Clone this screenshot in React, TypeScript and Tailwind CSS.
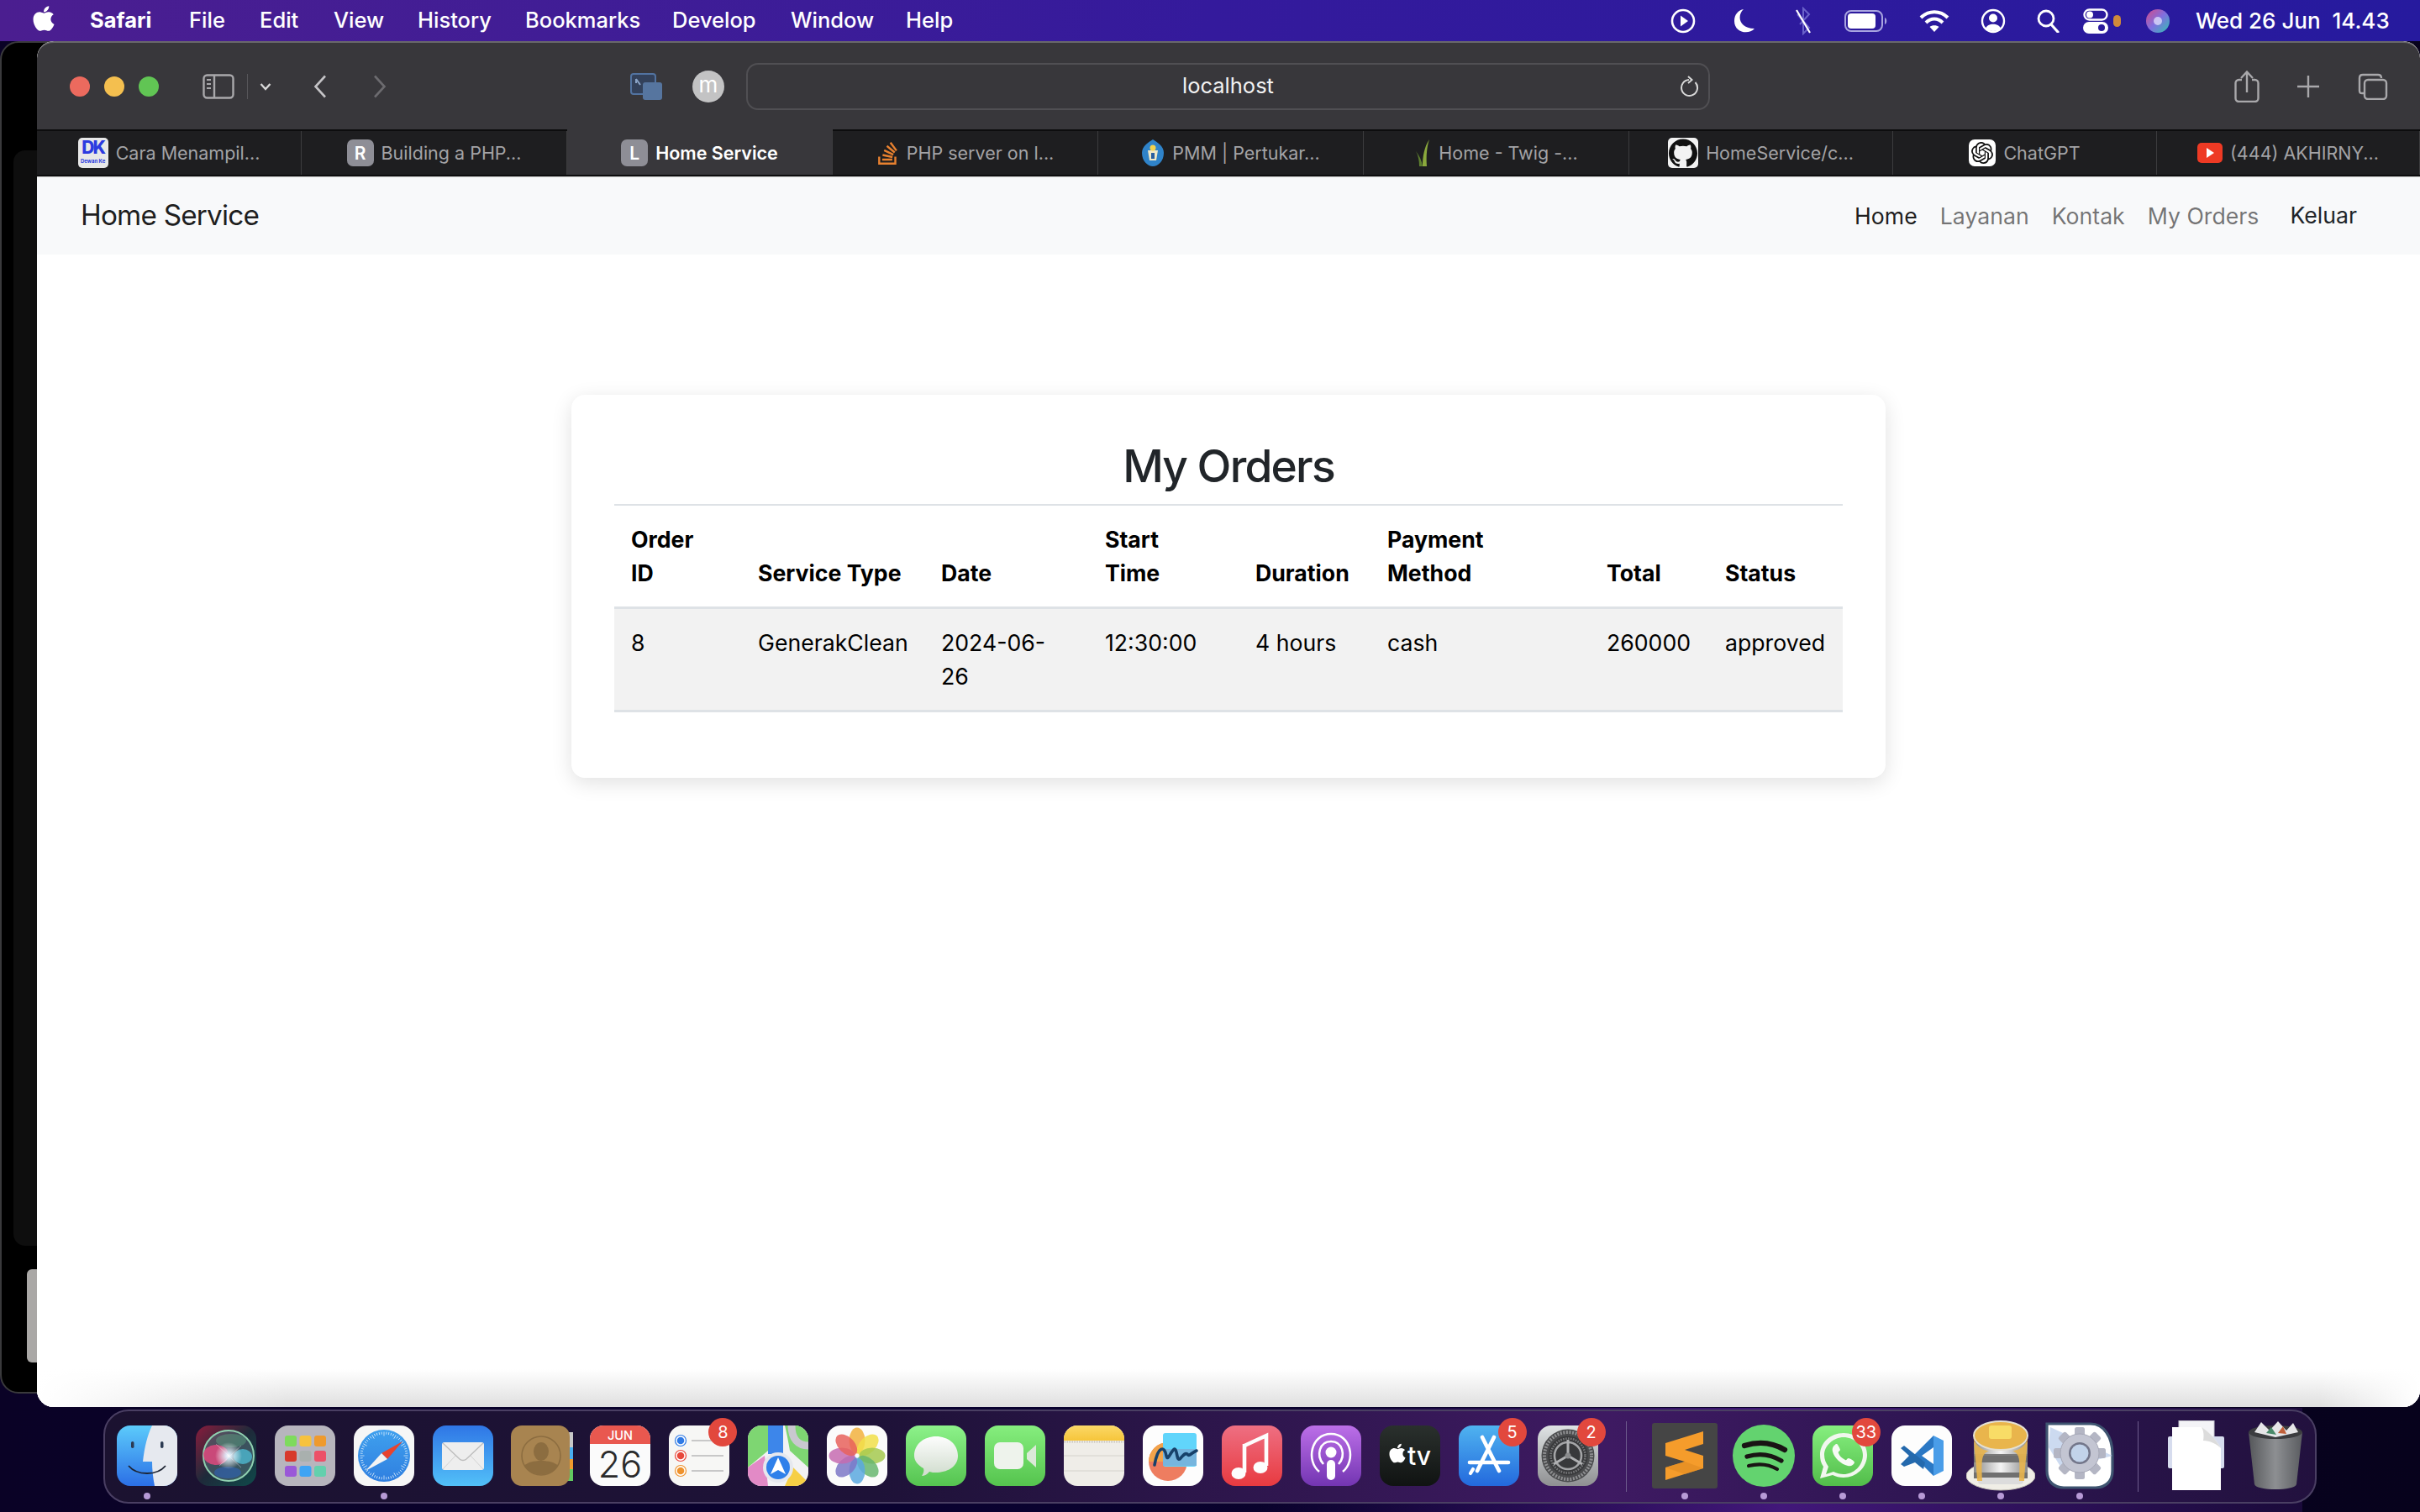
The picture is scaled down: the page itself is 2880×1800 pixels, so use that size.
import React from "react";
import { FaApple } from "react-icons/fa";
import { SiOpenai, SiGithub, SiStackoverflow } from "react-icons/si";

const sf = { fontFamily: "Inter, 'Liberation Sans', sans-serif" };

function Ico({ w, h, vb, children, className = "" }: { w: number; h: number; vb?: string; children: React.ReactNode; className?: string }) {
  return (
    <svg width={w} height={h} viewBox={vb ?? `0 0 ${w} ${h}`} fill="none" className={"block shrink-0 " + className}>
      {children}
    </svg>
  );
}

/* ---------- Menu bar status icons ---------- */
const S = "#ffffff";
function StatusIcons() {
  return (
    <div className="flex items-center h-full">
      <Ico w={30} h={30}>
        <circle cx="15" cy="15" r="13" stroke={S} strokeWidth="2.6" />
        <path d="M12 8.5 L21 15 L12 21.5 Z" fill={S} />
      </Ico>
      <Ico w={30} h={32} className="ml-[43px]">
        <path d="M14 2 C6 9 8 25 27 25 C20 33 3 30 3 16 C3 8 8 3 14 2 Z" fill={S} />
      </Ico>
      <Ico w={24} h={34} className="ml-[43px]">
        <path d="M5 9 L19 25 L12 32 L12 2 L19 9 L8 21" stroke="#6a62c9" strokeWidth="2" />
        <path d="M4 4 L20 31" stroke={S} strokeWidth="2.2" />
      </Ico>
      <Ico w={52} h={26} className="ml-[37px]">
        <rect x="1" y="1" width="44" height="24" rx="7" stroke="#a8a4e0" strokeWidth="2" />
        <rect x="4" y="4" width="33" height="18" rx="4" fill={S} />
        <path d="M48 9 C51 10 51 16 48 17 Z" fill="#a8a4e0" />
      </Ico>
      <Ico w={36} h={28} className="ml-[37px]">
        <path d="M2 10 C11 1 25 1 34 10" stroke={S} strokeWidth="4" />
        <path d="M8 16 C14 10 22 10 28 16" stroke={S} strokeWidth="4" />
        <path d="M18 27 L12.5 21 C15 18.5 21 18.5 23.5 21 Z" fill={S} />
      </Ico>
      <Ico w={30} h={30} className="ml-[37px]">
        <circle cx="15" cy="15" r="13" stroke={S} strokeWidth="2.4" />
        <circle cx="15" cy="11.5" r="5" fill={S} />
        <path d="M6 24 C8 17 22 17 24 24 C20 28 10 28 6 24 Z" fill={S} />
      </Ico>
      <Ico w={28} h={28} className="ml-[36px]">
        <circle cx="12" cy="11" r="9" stroke={S} strokeWidth="2.8" />
        <path d="M18 18 L26 27" stroke={S} strokeWidth="3.2" strokeLinecap="round" />
      </Ico>
      <Ico w={32} h={30} className="ml-[28px]">
        <rect x="1.5" y="1.5" width="27" height="12" rx="6" stroke={S} strokeWidth="2.4" />
        <circle cx="8" cy="7.5" r="4" fill={S} />
        <rect x="0" y="16" width="30" height="14" rx="7" fill={S} />
        <circle cx="22" cy="23" r="4" fill="#2a1a9c" />
      </Ico>
      <div className="w-[9px] h-[14px] rounded-full bg-[#d08a3a] ml-[4px]" />
      <Ico w={30} h={30} className="ml-[29px]">
        <defs>
          <linearGradient id="sb" x1="0" y1="0" x2="1" y2="1">
            <stop offset="0" stopColor="#d44a88" />
            <stop offset=".5" stopColor="#7f6fe0" />
            <stop offset="1" stopColor="#2fc3b0" />
          </linearGradient>
        </defs>
        <circle cx="15" cy="15" r="14" fill="url(#sb)" />
        <circle cx="15" cy="15" r="5" fill="#eaeaff" opacity=".7" />
      </Ico>
      <span className="ml-[30px] text-[26px] text-white font-medium whitespace-pre leading-none" style={sf}>Wed 26 Jun  14.43</span>
    </div>
  );
}

function MenuBar() {
  const items = [
    ["File", 225],
    ["Edit", 309],
    ["View", 397],
    ["History", 497],
    ["Bookmarks", 625],
    ["Develop", 800],
    ["Window", 941],
    ["Help", 1078],
  ] as const;
  return (
    <div className="relative h-[49px] w-full bg-gradient-to-r from-[#4b1e90] via-[#341a9c] to-[#261a9e]" style={sf}>
      <div className="absolute left-[1988px] top-0 h-full"><StatusIcons /></div>
      <FaApple className="absolute left-[35px] top-[5px] text-white" size={34} />
      <span className="absolute left-[107px] top-[5px] text-[25.5px] font-bold text-white">Safari</span>
      {items.map(([t, x]) => (
        <span key={t} className="absolute top-[5px] text-[25.5px] font-medium text-white" style={{ left: x }}>{t}</span>
      ))}
    </div>
  );
}

/* ---------- Safari toolbar ---------- */
function Toolbar() {
  const I = "#a9a8ab";
  return (
    <div className="relative flex items-center h-[105px] bg-[#38373b] border-t-2 border-[#69686b] rounded-t-[20px] pl-[39px] pr-[38px]" style={sf}>
      <div className="flex gap-[17px]">
        <div className="w-6 h-6 rounded-full bg-[#ec6a5e]" />
        <div className="w-6 h-6 rounded-full bg-[#f4bf4f]" />
        <div className="w-6 h-6 rounded-full bg-[#61c554]" />
      </div>
      <Ico w={38} h={30} className="ml-[52px]">
        <rect x="1.5" y="1.5" width="35" height="27" rx="4" stroke={I} strokeWidth="2.4" />
        <path d="M14 2 V28" stroke={I} strokeWidth="2.4" />
        <path d="M5 7 H10 M5 12 H10 M5 17 H10" stroke={I} strokeWidth="2" />
      </Ico>
      <div className="w-px h-[30px] bg-[#57565a] ml-[15px]" />
      <Ico w={14} h={10} className="ml-[14px]">
        <path d="M1.5 2 L7 8 L12.5 2" stroke="#d8d8d8" strokeWidth="2.4" />
      </Ico>
      <Ico w={16} h={28} className="ml-[50px]">
        <path d="M14 1.5 L2.5 14 L14 26.5" stroke="#c4c3c6" strokeWidth="2.6" />
      </Ico>
      <Ico w={16} h={28} className="ml-[55px]">
        <path d="M2 1.5 L13.5 14 L2 26.5" stroke="#6c6b6f" strokeWidth="2.6" />
      </Ico>
      <Ico w={38} h={32} className="ml-[290px]">
        <rect x="1" y="1" width="29" height="24" rx="3" fill="#33415a" stroke="#5273a0" strokeWidth="2" />
        <rect x="15" y="11" width="23" height="21" rx="3" fill="#56759f" />
        <path d="M7 7 L12 14 M7 7 V12" stroke="#8aa3c6" strokeWidth="2" />
      </Ico>
      <div className="w-[38px] h-[38px] rounded-full bg-[#c3c3c4] ml-[36px] flex items-center justify-center text-white text-[26px] leading-none pb-[3px]">m</div>
      <div className="relative w-[1147px] h-[56px] ml-[26px] rounded-[14px] border-2 border-[#504f53] flex items-center justify-center text-[25.5px] text-[#f2f2f2]">
        localhost
        <Ico w={24} h={26} className="absolute right-[11px] top-[13px]">
          <path d="M19.5 8 A9.5 9.5 0 1 1 12 5" stroke="#d8d8d8" strokeWidth="2" />
          <path d="M11 1 L15.5 5 L11 9" stroke="#d8d8d8" strokeWidth="2" />
        </Ico>
      </div>
      <div className="flex-1" />
      <Ico w={30} h={38}>
        <rect x="1.5" y="11" width="27" height="26" rx="4" stroke={I} strokeWidth="2.4" />
        <rect x="9" y="5" width="12" height="10" fill="#38373b" />
        <path d="M15 26 V2 M8 9 L15 1.5 L22 9" stroke={I} strokeWidth="2.4" />
      </Ico>
      <Ico w={28} h={28} className="ml-[44px]">
        <path d="M14 1 V27 M1 14 H27" stroke={I} strokeWidth="2.4" />
      </Ico>
      <Ico w={36} h={32} className="ml-[45px]">
        <path d="M7 24 H5 C3 24 2 23 2 21 V6 C2 3 3 2 6 2 H24 C27 2 28 3 28 6" stroke={I} strokeWidth="2.4" />
        <rect x="8" y="8" width="26" height="23" rx="4" stroke={I} strokeWidth="2.4" />
      </Ico>
    </div>
  );
}

/* ---------- Tabs ---------- */
const Letter = ({ c }: { c: string }) => (
  <div className="w-8 h-8 rounded-[7px] bg-[#8e8e96] flex items-center justify-center text-white text-[21px] font-semibold leading-none">{c}</div>
);
const fav: Record<string, React.ReactNode> = {
  dk: (
    <div className="w-9 h-9 rounded-[5px] bg-[#e8e8e8] flex flex-col items-center overflow-hidden">
      <span className="text-[#2b3ae0] text-[21px] leading-[23px] font-extrabold tracking-[-2px]">DK</span>
      <span className="text-[#2b3ae0] text-[6px] leading-[10px] font-bold whitespace-nowrap">Dewan Ke</span>
    </div>
  ),
  r: <Letter c="R" />,
  l: <Letter c="L" />,
  so: <SiStackoverflow size={27} className="text-[#e8812f]" />,
  pmm: (
    <Ico w={28} h={32}>
      <path d="M14 0 C20 4 27 8 27 16 C27 26 20 32 14 32 C8 32 1 26 1 16 C1 8 8 4 14 0 Z" fill="#2f83c9" />
      <path d="M8 13 H20 L18 25 H10 Z" fill="#f0e9c8" />
      <circle cx="14" cy="10" r="3.5" fill="#f3d34d" />
      <path d="M12 16 H16 V23 H12 Z" fill="#2a5fa0" />
    </Ico>
  ),
  twig: (
    <Ico w={20} h={32}>
      <path d="M18 0 C12 9 10 20 10 32 H15 C14 20 15 9 18 0 Z" fill="#8aa83c" />
      <path d="M2 14 C5 19 6 26 6 32 H10 C9 25 6 19 2 14 Z" fill="#5c7d2e" />
    </Ico>
  ),
  gh: (
    <div className="w-9 h-9 rounded-[5px] bg-[#f2f2f2] flex items-center justify-center">
      <SiGithub size={34} className="text-[#111]" />
    </div>
  ),
  gpt: (
    <div className="w-8 h-8 rounded-[7px] bg-white flex items-center justify-center">
      <SiOpenai size={26} className="text-[#111]" />
    </div>
  ),
  yt: (
    <div className="w-[30px] h-[24px] rounded-[5px] bg-[#ee3a24] flex items-center justify-center">
      <div className="w-0 h-0 border-y-[6px] border-y-transparent border-l-[9px] border-l-white" />
    </div>
  ),
};
const tabs = [
  ["dk", "Cara Menampil...", 315],
  ["r", "Building a PHP...", 316],
  ["l", "Home Service", 316],
  ["so", "PHP server on l...", 316],
  ["pmm", "PMM | Pertukar...", 316],
  ["twig", "Home - Twig -...", 316],
  ["gh", "HomeService/c...", 314],
  ["gpt", "ChatGPT", 314],
  ["yt", "(444) AKHIRNY...", 313],
] as const;

function TabBar() {
  return (
    <div className="flex h-[56px] bg-[#1e1e20] border-t-2 border-b-2 border-[#0d0d0e]" style={sf}>
      {tabs.map(([f, t, w]) => (
        <div
          key={t}
          className={
            "flex items-center justify-center gap-[9px] border-r border-[#3c3c3e] " +
            (f === "l" ? "bg-[#38373b] -mt-[2px] h-[54px] pt-[2px] text-white font-semibold" : "h-full text-[#a3a3a6]")
          }
          style={{ width: w }}
        >
          {fav[f]}
          <span className="text-[21.5px] whitespace-nowrap">{t}</span>
        </div>
      ))}
    </div>
  );
}

/* ---------- Page ---------- */
function NavBar() {
  return (
    <div className="flex items-center h-[93px] bg-[#f8f9fa] border-t border-[#c8c8c8] pl-[52px] pr-[75px] text-[26.67px]" style={sf}>
      <span className="text-[33.3px] tracking-[-0.8px] text-black/90">Home Service</span>
      <div className="flex-1" />
      <span className="text-black/90">Home</span>
      <span className="text-black/55 ml-[27px]">Layanan</span>
      <span className="text-black/55 ml-[27px]">Kontak</span>
      <span className="text-black/55 ml-[27px]">My Orders</span>
      <span className="text-[#212529] ml-[37px] -mt-[3px]">Keluar</span>
    </div>
  );
}

const cols = [151, 218, 195, 179, 157, 261, 141, 160];
const head: React.ReactNode[] = [
  <>Order<br />ID</>,
  "Service Type",
  "Date",
  <>Start<br />Time</>,
  "Duration",
  <>Payment<br />Method</>,
  "Total",
  "Status",
];
const row = ["8", "GenerakClean", "2024-06-26", "12:30:00", "4 hours", "cash", "260000", "approved"];

function OrdersCard() {
  return (
    <div className="w-[1564px] h-[456px] mx-auto mt-[167px] bg-white rounded-[16px] shadow-[0_6px_24px_rgba(0,0,0,0.12)] px-[51px] pt-[53px]" style={sf}>
      <h2 className="text-[53.3px] leading-[64px] font-medium tracking-[-1.8px] text-[#212529] text-center mb-[13px]">My Orders</h2>
      <table className="w-[1462px] table-fixed border-collapse text-[26.67px] leading-[40px] text-black">
        <colgroup>
          {cols.map((c, i) => (
            <col key={i} style={{ width: c }} />
          ))}
        </colgroup>
        <thead>
          <tr className="border-t-2 border-b-[3px] border-t-[#dee2e6] border-b-[#dee2e6]">
            {head.map((h, i) => (
              <th key={i} className="p-[20px] font-bold text-left align-bottom whitespace-nowrap">{h}</th>
            ))}
          </tr>
        </thead>
        <tbody>
          <tr className="bg-[#f2f2f2] border-b-[3px] border-[#dee2e6]">
            {row.map((c) => (
              <td key={c} className="p-[20px] align-top">{c}</td>
            ))}
          </tr>
        </tbody>
      </table>
    </div>
  );
}

/* ---------- Dock icons ---------- */
const Finder = () => (
  <Ico w={72} h={72}>
    <defs>
      <linearGradient id="f1" x1="0" y1="0" x2="0" y2="1"><stop offset="0" stopColor="#5ccbfb" /><stop offset="1" stopColor="#2b6fe6" /></linearGradient>
      <clipPath id="fc"><rect width="72" height="72" rx="16" /></clipPath>
    </defs>
    <g clipPath="url(#fc)">
      <rect width="72" height="72" fill="url(#f1)" />
      <path d="M42 0 H72 V72 H45 C43 62 42 52 42 43 H31 C33 25 37 10 42 0 Z" fill="#e6e9ef" />
      <rect x="17" y="19" width="3.5" height="8" rx="1.7" fill="#2c3a52" />
      <rect x="52" y="19" width="3.5" height="8" rx="1.7" fill="#2c3a52" />
      <path d="M14 48 C24 60 48 60 58 48" stroke="#1d2433" strokeWidth="1.8" />
    </g>
  </Ico>
);
const Siri = () => (
  <Ico w={72} h={72}>
    <defs>
      <linearGradient id="s0" x1="0" y1="0" x2="1" y2="1"><stop offset="0" stopColor="#8a1c3c" /><stop offset=".5" stopColor="#1e2a3a" /><stop offset="1" stopColor="#0f4a4a" /></linearGradient>
      <radialGradient id="s1" cx=".5" cy=".5" r=".5"><stop offset="0" stopColor="#fff" /><stop offset=".22" stopColor="#dff2ff" stopOpacity=".9" /><stop offset="1" stopColor="#fff" stopOpacity="0" /></radialGradient>
    </defs>
    <rect width="72" height="72" rx="16" fill="url(#s0)" />
    <circle cx="39" cy="36" r="30" fill="#55707a" fillOpacity=".55" stroke="#8fd0b0" strokeWidth="2" />
    <ellipse cx="24" cy="35" rx="15" ry="12" fill="#e0497e" opacity=".85" />
    <ellipse cx="56" cy="37" rx="11" ry="9" fill="#4db8d0" opacity=".8" />
    <ellipse cx="38" cy="56" rx="16" ry="7" fill="#2f62b8" opacity=".6" />
    <ellipse cx="42" cy="18" rx="18" ry="8" fill="#66c08e" opacity=".35" />
    <circle cx="39" cy="36" r="16" fill="url(#s1)" />
    <path d="M24 22 L54 50 M54 24 L28 48" stroke="#fff" strokeWidth="1" opacity=".35" />
  </Ico>
);
const Launchpad = () => {
  const c = ["#7edb5c", "#f7c23e", "#ee9a2e", "#d8392c", "#a9b0ae", "#ec5068", "#9a58d8", "#3ea4f4", "#63d0ad"];
  return (
    <Ico w={72} h={72}>
      <rect width="72" height="72" rx="16" fill="#b7b5bd" />
      {c.map((k, i) => (
        <rect key={i} x={12 + (i % 3) * 17.5} y={12 + Math.floor(i / 3) * 18} width="14" height="13" rx="3" fill={k} />
      ))}
    </Ico>
  );
};
const Safari = () => {
  const t = [];
  for (let i = 0; i < 60; i++) t.push(i * 6);
  return (
    <Ico w={72} h={72}>
      <defs><linearGradient id="sa" x1="0" y1="0" x2="0" y2="1"><stop offset="0" stopColor="#3fa0ee" /><stop offset="1" stopColor="#2f7fe0" /></linearGradient></defs>
      <rect width="72" height="72" rx="16" fill="#f6f6f6" />
      <circle cx="36" cy="36" r="31" fill="url(#sa)" />
      {t.map((a) => (
        <line key={a} x1="36" y1="7.5" x2="36" y2={a % 30 === 0 ? 12.5 : 10.5} stroke="#d9ecfb" strokeWidth=".8" transform={`rotate(${a} 36 36)`} />
      ))}
      <path d="M58 19 L33 33 L40 40 Z" fill="#e8432f" />
      <path d="M14 54 L33 33 L40 40 Z" fill="#f3f3f3" />
    </Ico>
  );
};
const Mail = () => (
  <Ico w={72} h={72}>
    <defs><linearGradient id="m1" x1="0" y1="0" x2="0" y2="1"><stop offset="0" stopColor="#2f76e6" /><stop offset="1" stopColor="#52c0f8" /></linearGradient></defs>
    <rect width="72" height="72" rx="16" fill="url(#m1)" />
    <rect x="11" y="20" width="50" height="33" rx="3" fill="#eeeeee" />
    <path d="M12 21 L32 40 C34 42 38 42 40 40 L60 21" stroke="#bdbdbd" strokeWidth="1.3" />
    <path d="M12 52 L27 36 M60 52 L45 36" stroke="#d2d2d2" strokeWidth="1" />
  </Ico>
);
const Contacts = () => (
  <Ico w={74} h={72}>
    <rect x="64" y="8" width="10" height="18" fill="#c8c8c8" />
    <rect x="64" y="26" width="10" height="14" fill="#48aef0" />
    <rect x="64" y="40" width="10" height="12" fill="#ef9a2e" />
    <rect x="64" y="52" width="10" height="14" fill="#62c960" />
    <rect width="70" height="72" rx="13" fill="#a88450" />
    <circle cx="36" cy="36" r="23" stroke="#8c6d40" strokeWidth="1.6" />
    <ellipse cx="36" cy="31" rx="9" ry="11" fill="#8c6d40" />
    <path d="M16 48 C22 40 50 40 56 48 C50 62 22 62 16 48 Z" fill="#8c6d40" />
  </Ico>
);
const Calendar = () => (
  <Ico w={72} h={72}>
    <defs><clipPath id="cc"><rect width="72" height="72" rx="16" /></clipPath></defs>
    <g clipPath="url(#cc)">
      <rect width="72" height="72" fill="#fbfbfb" />
      <rect width="72" height="22" fill="#e9584f" />
      <text x="36" y="17" textAnchor="middle" fontSize="14.5" fill="#fff" style={sf} fontWeight="500">JUN</text>
      <text x="36" y="62" textAnchor="middle" fontSize="43" fill="#2b2b2b" style={sf} fontWeight="300">26</text>
    </g>
  </Ico>
);
const Reminders = () => (
  <Ico w={72} h={72}>
    <rect width="72" height="72" rx="16" fill="#f7f7f5" />
    {[["#2f7ae5", 18], ["#e8483b", 36], ["#ee922d", 54]].map(([c, y]) => (
      <g key={String(c)}>
        <circle cx="14" cy={y as number} r="6.5" fill="#fff" stroke={c as string} strokeWidth="1.2" />
        <circle cx="14" cy={y as number} r="4.3" fill={c as string} />
        <path d={`M27 ${y} H65`} stroke="#c8c8c8" strokeWidth="1.8" />
      </g>
    ))}
  </Ico>
);
const Maps = () => (
  <Ico w={72} h={72}>
    <defs><clipPath id="mp"><rect width="72" height="72" rx="16" /></clipPath></defs>
    <g clipPath="url(#mp)">
      <rect width="72" height="72" fill="#f2f2f4" />
      <path d="M0 0 H24 V30 L0 50 Z" fill="#7ed672" />
      <path d="M44 0 H72 V50 L50 30 C48 18 46 8 44 0 Z" fill="#7ed672" />
      <path d="M0 50 L20 36 L24 72 H0 Z" fill="#e28ac6" />
      <path d="M44 72 L54 50 L72 68 V72 Z" fill="#f6cf45" />
      <rect x="24" y="0" width="18" height="34" fill="#3d86ea" />
      <path d="M52 0 C52 16 60 24 72 24" stroke="#c9c8cf" strokeWidth="9" />
      <circle cx="36" cy="50" r="18" fill="#e6e8ee" />
      <circle cx="36" cy="50" r="14" fill="#2f80ea" />
      <path d="M36 38 L45 58 L36 53 L27 58 Z" fill="#fff" />
    </g>
  </Ico>
);
const Photos = () => {
  const c = ["#f2b23e", "#f1df4a", "#a5c94f", "#67b66f", "#5aa8df", "#7d77c7", "#c66bb0", "#e8615c"];
  return (
    <Ico w={72} h={72}>
      <rect width="72" height="72" rx="16" fill="#fbfbfb" />
      {c.map((k, i) => (
        <ellipse key={i} cx="36" cy="18" rx="9.5" ry="15.5" fill={k} opacity=".85" transform={`rotate(${i * 45} 36 36)`} />
      ))}
    </Ico>
  );
};
const Messages = () => (
  <Ico w={72} h={72}>
    <defs>
      <linearGradient id="g1" x1="0" y1="0" x2="0" y2="1"><stop offset="0" stopColor="#8df28a" /><stop offset="1" stopColor="#55c450" /></linearGradient>
      <linearGradient id="g2" x1="0" y1="0" x2="0" y2="1"><stop offset="0" stopColor="#fdfdfd" /><stop offset="1" stopColor="#d0dccd" /></linearGradient>
    </defs>
    <rect width="72" height="72" rx="16" fill="url(#g1)" />
    <path d="M36 13 C50 13 62 22 62 36 C62 50 48 56 36 56 C33 56 31 56 28 55 C26 58 22 60 19 60 C21 57 22 54 21 51 C14 47 10 42 10 36 C10 22 22 13 36 13 Z" fill="url(#g2)" />
  </Ico>
);
const FaceTime = () => (
  <Ico w={72} h={72}>
    <defs>
      <linearGradient id="g3" x1="0" y1="0" x2="0" y2="1"><stop offset="0" stopColor="#86ee7e" /><stop offset="1" stopColor="#55c44e" /></linearGradient>
    </defs>
    <rect width="72" height="72" rx="16" fill="url(#g3)" />
    <rect x="11" y="20" width="35" height="32" rx="7" fill="#eef3ec" />
    <path d="M50 33 L61 23 V50 L50 40 Z" fill="#dbe9d8" />
  </Ico>
);
const Notes = () => (
  <Ico w={72} h={72}>
    <defs>
      <clipPath id="nc"><rect width="72" height="72" rx="16" /></clipPath>
      <linearGradient id="ny" x1="0" y1="0" x2="0" y2="1"><stop offset="0" stopColor="#fbd867" /><stop offset="1" stopColor="#f6c53a" /></linearGradient>
    </defs>
    <g clipPath="url(#nc)">
      <rect width="72" height="72" fill="#efede8" />
      <rect width="72" height="18" fill="url(#ny)" />
      <path d="M0 19.5 H72" stroke="#c4c0b8" strokeWidth="2" strokeDasharray="1 1" />
      <path d="M0 36 H72 M0 54 H72" stroke="#d4d2cc" strokeWidth="1" />
    </g>
  </Ico>
);
const Freeform = () => (
  <Ico w={72} h={72}>
    <rect width="72" height="72" rx="16" fill="#fdfdfd" />
    <circle cx="30" cy="43" r="23" fill="#ee7d60" />
    <path d="M7 43 A23 23 0 0 1 30 20 V43 Z" fill="#f2a34a" />
    <rect x="24" y="9" width="40" height="40" rx="3" fill="#61d5fb" />
    <rect x="24" y="28" width="40" height="20" fill="#76b5de" />
    <path d="M14 47 C18 24 26 24 28 36 C30 44 33 30 38 28 C41 28 40 42 44 40 C48 36 50 32 53 34 C55 38 58 32 64 30" stroke="#17416a" strokeWidth="3.6" strokeLinecap="round" />
  </Ico>
);
const Music = () => (
  <Ico w={72} h={72}>
    <defs><linearGradient id="mu" x1="0" y1="0" x2="0" y2="1"><stop offset="0" stopColor="#ee6f82" /><stop offset="1" stopColor="#e83a40" /></linearGradient></defs>
    <rect width="72" height="72" rx="16" fill="url(#mu)" />
    <path d="M27 24 L53 12 V48" stroke="#fdfdfd" strokeWidth="4.6" />
    <path d="M27 22 V56" stroke="#fdfdfd" strokeWidth="4.6" />
    <ellipse cx="20" cy="57" rx="8.5" ry="7" fill="#fdfdfd" />
    <ellipse cx="46" cy="50" rx="8.5" ry="7" fill="#fdfdfd" />
  </Ico>
);
const Podcasts = () => (
  <Ico w={72} h={72}>
    <defs><linearGradient id="po" x1="0" y1="0" x2="0" y2="1"><stop offset="0" stopColor="#bc6fe8" /><stop offset="1" stopColor="#7335b2" /></linearGradient></defs>
    <rect width="72" height="72" rx="16" fill="url(#po)" />
    <path d="M22 55 C6 42 12 10 36 10 C60 10 66 42 50 55" stroke="#fff" strokeWidth="2.6" />
    <path d="M27 46 C18 36 22 19 36 19 C50 19 54 36 45 46" stroke="#fff" strokeWidth="2.6" />
    <circle cx="36" cy="32" r="6.5" fill="#fff" />
    <rect x="31" y="41" width="10" height="24" rx="5" fill="#fff" />
  </Ico>
);
const Tv = () => (
  <Ico w={72} h={72}>
    <defs><linearGradient id="tv" x1="0" y1="0" x2="0" y2="1"><stop offset="0" stopColor="#2a302d" /><stop offset="1" stopColor="#101312" /></linearGradient></defs>
    <rect width="72" height="72" rx="16" fill="url(#tv)" />
    <foreignObject x="8" y="20" width="26" height="30"><FaApple size={26} color="#fff" /></foreignObject>
    <text x="33" y="47" fontSize="30" fill="#fff" style={sf} fontWeight="500">tv</text>
  </Ico>
);
const AppStore = () => (
  <Ico w={72} h={72}>
    <defs><linearGradient id="as" x1="0" y1="0" x2="0" y2="1"><stop offset="0" stopColor="#4fb3f0" /><stop offset="1" stopColor="#2369dd" /></linearGradient></defs>
    <rect width="72" height="72" rx="16" fill="url(#as)" />
    <path d="M42 14 L22 54 M28 14 L48 54" stroke="#fff" strokeWidth="4.6" strokeLinecap="round" />
    <path d="M13 44 H59" stroke="#fff" strokeWidth="4.6" strokeLinecap="round" />
    <path d="M17 52 L14 57" stroke="#fff" strokeWidth="4.2" strokeLinecap="round" />
  </Ico>
);
const Settings = () => (
  <Ico w={72} h={72}>
    <defs><linearGradient id="se" x1="0" y1="0" x2="0" y2="1"><stop offset="0" stopColor="#dfe3e4" /><stop offset="1" stopColor="#8f9092" /></linearGradient></defs>
    <rect width="72" height="72" rx="16" fill="url(#se)" />
    <circle cx="36" cy="36" r="31.5" fill="#4a4b4d" />
    <circle cx="36" cy="36" r="28" stroke="#8e8f91" strokeWidth="4" strokeDasharray="2 1.6" />
    <circle cx="36" cy="36" r="23.5" fill="#38393b" />
    <circle cx="36" cy="36" r="20.5" stroke="#77787a" strokeWidth="2.6" strokeDasharray="1.6 1.4" />
    <circle cx="36" cy="36" r="16" stroke="#a4a5a7" strokeWidth="2.6" />
    <path d="M36 36 V17 M36 36 L19 46 M36 36 L53 46" stroke="#b0b1b3" strokeWidth="3" />
    <circle cx="36" cy="36" r="3.5" fill="#8a8b8d" />
  </Ico>
);
const Sublime = () => (
  <Ico w={78} h={78}>
    <rect width="78" height="78" rx="3" fill="#454545" />
    <path d="M61 10 V25 L39 32 L61 39 V54 L16 68 V53 L39 46 L16 39 V24 Z" fill="#f59c2b" />
    <path d="M39 46 L61 54 L39 61 L16 53 Z" fill="#e08a22" opacity=".6" />
  </Ico>
);
const Spotify = () => (
  <Ico w={74} h={74}>
    <circle cx="37" cy="37" r="37" fill="#63d36f" />
    <path d="M14 25 C30 20 47 21 62 30" stroke="#191414" strokeWidth="6.2" strokeLinecap="round" />
    <path d="M17 38 C30 34 45 35 58 43" stroke="#191414" strokeWidth="5.2" strokeLinecap="round" />
    <path d="M19 49 C31 46 43 47 53 53" stroke="#191414" strokeWidth="4.2" strokeLinecap="round" />
  </Ico>
);
const WhatsApp = () => (
  <Ico w={72} h={72}>
    <defs><linearGradient id="wa" x1="0" y1="0" x2="0" y2="1"><stop offset="0" stopColor="#86ef7f" /><stop offset="1" stopColor="#52bd4a" /></linearGradient></defs>
    <rect width="72" height="72" rx="16" fill="url(#wa)" />
    <path d="M37 9 C53 9 65 21 65 35 C65 50 52 62 37 62 C32 62 28 61 24 59 L9 63 L13 49 C10 45 9 40 9 35 C9 21 21 9 37 9 Z M37 14 C25 14 14 24 14 35 C14 40 16 45 19 49 L16 58 L25 55 C29 57 33 58 37 58 C49 58 60 48 60 35 C60 23 49 14 37 14 Z" fill="#f1f7ee" />
    <path d="M27 23 C25 24 23 27 24 31 C26 39 34 46 42 48 C46 49 49 47 50 44 C50 42 44 39 43 39 C41 39 41 42 39 41 C35 39 32 36 31 33 C30 31 33 30 33 29 C33 28 30 22 29 22 C28 22 27 22 27 23 Z" fill="#f7fbf5" />
  </Ico>
);
const VsCode = () => (
  <Ico w={72} h={72}>
    <rect width="72" height="72" rx="16" fill="#fdfdfd" />
    <path d="M50 12 L62 18 V54 L50 60 Z" fill="#4a9de8" />
    <path d="M50 12 L26 36 L50 60 V46 L36 36 L50 26 Z" fill="#2b78c4" />
    <path d="M11 27 L15 24 L40 44 L38 52 L28 44 L15 49 L11 46 L21 36 Z" fill="#2469ad" />
  </Ico>
);
const SequelPro = () => (
  <Ico w={82} h={84}>
    <defs>
      <linearGradient id="sq" x1="0" y1="0" x2="1" y2="0">
        <stop offset="0" stopColor="#8a8a8a" /><stop offset=".5" stopColor="#f4f4f4" /><stop offset="1" stopColor="#8a8a8a" />
      </linearGradient>
    </defs>
    <ellipse cx="41" cy="66" rx="41" ry="17" fill="#f0eee6" stroke="#c4c1b6" />
    <path d="M12 68 C20 78 62 78 70 68 L66 62 H16 Z" fill="#eec25a" opacity=".8" />
    <rect x="9" y="14" width="64" height="60" rx="20" fill="#7a7a7a" />
    <rect x="9" y="26" width="64" height="14" fill="url(#sq)" />
    <rect x="9" y="42" width="64" height="8" fill="#707070" />
    <rect x="9" y="50" width="64" height="12" fill="url(#sq)" />
    <rect x="9" y="62" width="64" height="7" fill="#707070" />
    <rect x="14" y="68" width="54" height="8" rx="4" fill="#dcdcdc" />
    <ellipse cx="41" cy="18" rx="32" ry="17" fill="#e9b54c" stroke="#e4e0d4" strokeWidth="2" />
    <path d="M9 18 C9 30 20 36 27 36 C18 40 18 46 19 72 H13 C12 50 9 34 9 18 Z" fill="#e9b54c" opacity=".9" />
    <path d="M73 18 C73 30 62 36 55 36 C64 40 64 46 63 72 H69 C70 50 73 34 73 18 Z" fill="#e9b54c" opacity=".9" />
    <rect x="27" y="6" width="27" height="16" rx="3" fill="#f8dc66" />
  </Ico>
);
const GearApp = () => {
  const teeth = [0, 45, 90, 135, 180, 225, 270, 315];
  return (
    <Ico w={82} h={80}>
      <defs><clipPath id="gc"><path d="M2 2 H54 C70 2 80 18 80 38 V58 C80 70 72 78 60 78 H22 C10 78 2 70 2 58 Z" /></clipPath></defs>
      <path d="M2 2 H54 C70 2 80 18 80 38 V58 C80 70 72 78 60 78 H22 C10 78 2 70 2 58 Z" fill="#ffffff" stroke="#3e5470" strokeWidth="3.2" />
      <g clipPath="url(#gc)">
        <path d="M6 6 L80 40 L20 56 L4 30 Z" fill="#b6cbea" opacity=".7" />
      </g>
      {teeth.map((a) => (
        <rect key={a} x="35" y="6" width="12" height="12" rx="2.5" fill="#b4b6c4" transform={`rotate(${a} 41 37)`} />
      ))}
      <circle cx="41" cy="37" r="23" fill="#c3c5d2" stroke="#a5a7b6" />
      <circle cx="41" cy="37" r="13" fill="#73768a" />
      <circle cx="41" cy="37" r="10.5" fill="#c2d3ea" />
    </Ico>
  );
};
const Docs = () => (
  <Ico w={68} h={84}>
    <rect x="13" y="0.5" width="42" height="30" fill="#f4f4f7" stroke="#c8c8d0" />
    <rect x="0" y="19" width="67" height="38" rx="2" fill="#d6dcee" />
    <path d="M5 8 H40 C50 14 58 24 63 33 V83 H5 Z" fill="#ffffff" />
    <path d="M40 8 C44 14 42 24 42 24 C50 24 58 28 63 33 C58 24 50 14 40 8 Z" fill="#dcdcdc" />
  </Ico>
);
const Trash = () => (
  <Ico w={66} h={84}>
    <defs><linearGradient id="tr" x1="0" y1="0" x2="1" y2="0"><stop offset="0" stopColor="#55575a" /><stop offset=".5" stopColor="#8d8f92" /><stop offset="1" stopColor="#5a5c60" /></linearGradient></defs>
    <path d="M1 14 H65 L58 76 C56 84 10 84 8 76 Z" fill="url(#tr)" />
    <ellipse cx="33" cy="14" rx="32" ry="8" fill="#3c3d40" />
    <path d="M8 14 L16 2 L26 12 L36 1 L46 12 L54 3 L60 14 L33 20 Z" fill="#e6e6e8" />
    <path d="M22 15 L28 8 L34 17 Z" fill="#4a8a6a" />
    <path d="M36 15 L42 7 L46 16 Z" fill="#c0603a" />
  </Ico>
);

type DockItem = { el: React.ReactNode; dot?: boolean; badge?: string };
const Slot = ({ el, dot, badge }: DockItem) => (
  <div className="relative w-[94px] h-full flex items-center justify-center">
    <div className="relative -mt-[2px]">
      {el}
      {badge && (
        <div className="absolute -top-[9px] -right-[9px] w-[34px] h-[34px] rounded-full bg-[#e2483d] text-white text-[20px] flex items-center justify-center" style={sf}>
          {badge}
        </div>
      )}
    </div>
    {dot && <div className="absolute bottom-[3px] w-2 h-2 rounded-full bg-[#b79ad6]" />}
  </div>
);

function Dock() {
  const a: DockItem[] = [
    { el: <Finder />, dot: true },
    { el: <Siri /> },
    { el: <Launchpad /> },
    { el: <Safari />, dot: true },
    { el: <Mail /> },
    { el: <Contacts /> },
    { el: <Calendar /> },
    { el: <Reminders />, badge: "8" },
    { el: <Maps /> },
    { el: <Photos /> },
    { el: <Messages /> },
    { el: <FaceTime /> },
    { el: <Notes /> },
    { el: <Freeform /> },
    { el: <Music /> },
    { el: <Podcasts /> },
    { el: <Tv /> },
    { el: <AppStore />, badge: "5" },
    { el: <Settings />, badge: "2" },
  ];
  const b: DockItem[] = [
    { el: <Sublime />, dot: true },
    { el: <Spotify />, dot: true },
    { el: <WhatsApp />, dot: true, badge: "33" },
    { el: <VsCode />, dot: true },
    { el: <SequelPro />, dot: true },
    { el: <GearApp />, dot: true },
  ];
  const c: DockItem[] = [{ el: <Docs /> }, { el: <Trash /> }];
  const Sep = () => <div className="w-[1.5px] h-[84px] bg-[#6d5b8c] mx-[22px] shrink-0" />;
  return (
    <div className="flex items-center w-[2634px] h-[112px] ml-[123px] mt-[3px] rounded-[30px] border-2 border-[#4a3f63] bg-[linear-gradient(90deg,#1b1230_0%,#1e1238_35%,#3e1a62_68%,#2c1550_85%,#22113e_100%)] pl-[3px]">
      {a.map((x, i) => <Slot key={i} {...x} />)}
      <Sep />
      {b.map((x, i) => <Slot key={i} {...x} />)}
      <Sep />
      {c.map((x, i) => <Slot key={i} {...x} />)}
    </div>
  );
}

export default function App() {
  return (
    <div className="relative w-[2880px] h-[1800px] overflow-hidden bg-gradient-to-r from-[#0a0226] via-[#0a0230] via-40% to-[#07021c]">
      {/* wallpaper glow below the dock */}
      <div className="absolute left-[1500px] top-[1676px] w-[1240px] h-[124px] bg-gradient-to-r from-transparent via-[#42177a] to-[#1a0a3a]" />
      <MenuBar />
      {/* window behind Safari */}
      <div className="absolute left-0 top-[49px] w-[60px] h-[1610px] bg-black border-2 border-[#3a3a3c] rounded-l-[22px]">
        <div className="absolute left-[14px] top-[128px] w-[50px] h-[1304px] bg-[#0e0e0e] rounded-[14px]" />
        <div className="absolute left-[30px] top-[1460px] w-[30px] h-[111px] bg-[#aaa8a6] rounded-[6px]" />
      </div>
      <div className="relative ml-[44px] w-[2836px] h-[1626px] rounded-[20px] overflow-hidden flex flex-col bg-white">
        <Toolbar />
        <TabBar />
        <NavBar />
        <div className="flex-1 bg-white">
          <OrdersCard />
        </div>
        <div className="absolute left-0 right-0 bottom-0 h-[45px] bg-gradient-to-b from-transparent to-[#dfdfdf]" />
        <div className="absolute left-0 bottom-0 w-[300px] h-[60px] bg-gradient-to-r from-white to-transparent" />
        <div className="absolute right-0 bottom-0 w-[120px] h-[60px] bg-gradient-to-l from-white to-transparent" />
      </div>
      <div className="relative">
        <Dock />
      </div>
    </div>
  );
}
